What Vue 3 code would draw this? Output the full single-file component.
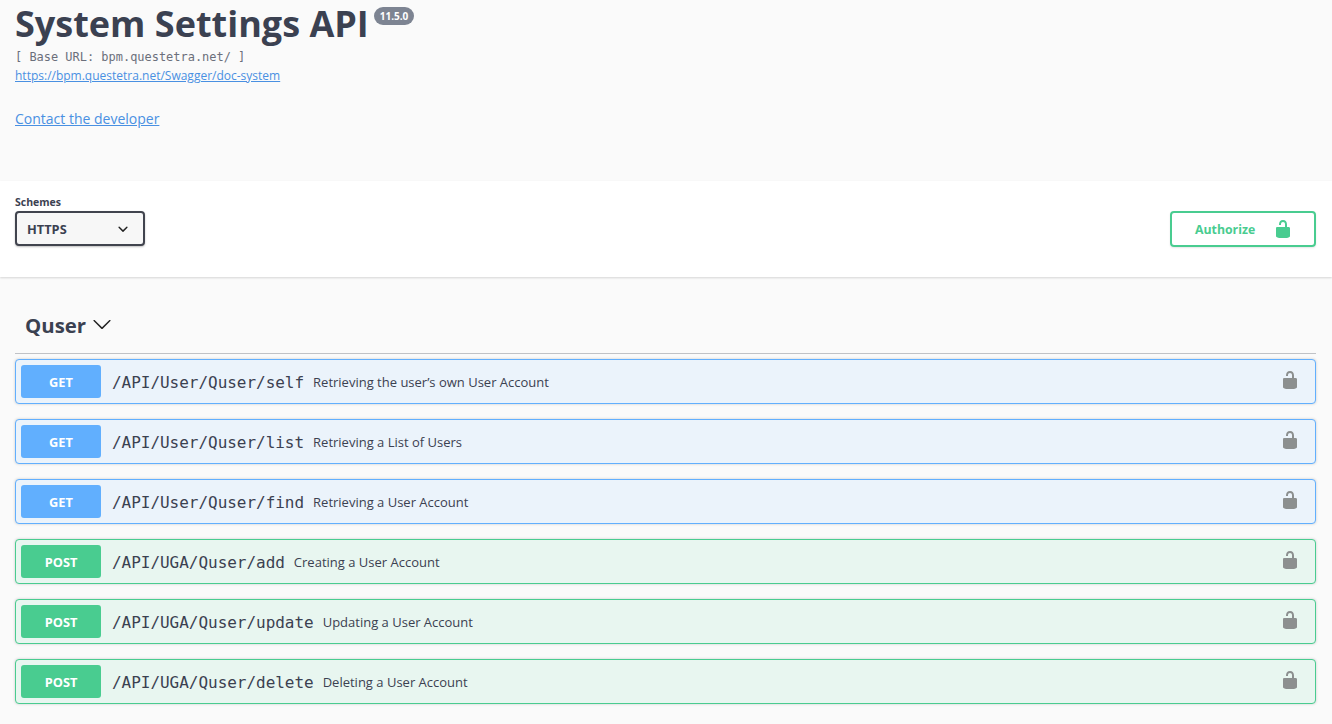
<script setup>
const rows = [
  { m: 'GET', p: '/API/User/Quser/self', d: 'Retrieving the user’s own User Account' },
  { m: 'GET', p: '/API/User/Quser/list', d: 'Retrieving a List of Users' },
  { m: 'GET', p: '/API/User/Quser/find', d: 'Retrieving a User Account' },
  { m: 'POST', p: '/API/UGA/Quser/add', d: 'Creating a User Account' },
  { m: 'POST', p: '/API/UGA/Quser/update', d: 'Updating a User Account' },
  { m: 'POST', p: '/API/UGA/Quser/delete', d: 'Deleting a User Account' },
]
const lock = 'M15.8 8H14V5.6C14 2.703 12.665 1 10 1 7.334 1 6 2.703 6 5.6V6h2v-.801C8 3.754 8.797 3 10 3c1.203 0 2 .754 2 2.199V8H4c-.553 0-1 .646-1 1.199V17c0 .549.428 1.139.951 1.307l1.197.387C5.672 18.861 6.55 19 7.1 19h5.8c.549 0 1.428-.139 1.951-.307l1.196-.387c.524-.167.953-.757.953-1.306V9.199C17 8.646 16.352 8 15.8 8z'
const arrow = 'M17.418 6.109c.272-.268.709-.268.979 0s.271.701 0 .969l-7.908 7.83c-.27.268-.707.268-.979 0l-7.908-7.83c-.27-.268-.27-.701 0-.969.271-.268.709-.268.979 0L10 13.25l7.418-7.141z'
const selArrow = 'M13.418 7.859a.695.695 0 0 1 .978 0 .68.68 0 0 1 0 .969l-3.908 3.83a.697.697 0 0 1-.979 0l-3.908-3.83a.68.68 0 0 1 0-.969.695.695 0 0 1 .978 0L10 11l3.418-3.141z'
</script>

<template>
  <div class="page">
    <section class="info">
      <div class="title-line">
        <h2 class="title">System Settings API</h2>
        <span class="version">11.5.0</span>
      </div>
      <div class="base">[ Base URL: bpm.questetra.net/ ]</div>
      <a class="spec" href="#">https://bpm.questetra.net/Swagger/doc-system</a>
      <a class="contact" href="#">Contact the developer</a>
    </section>

    <section class="schemes">
      <div class="scheme-col">
        <div class="scheme-label">Schemes</div>
        <div class="select">
          <span>HTTPS</span>
          <svg class="sel-arrow" viewBox="0 0 20 20"><path :d="selArrow" /></svg>
        </div>
      </div>
      <button class="authorize">
        <span>Authorize</span>
        <svg class="auth-lock" viewBox="0 0 20 20"><path :d="lock" /></svg>
      </button>
    </section>

    <section class="ops">
      <h3 class="tag">
        <span>Quser</span>
        <svg class="tag-arrow" viewBox="0 0 20 20"><path :d="arrow" /></svg>
      </h3>
      <div v-for="r in rows" :key="r.p" class="op" :class="r.m.toLowerCase()">
        <span class="method">{{ r.m }}</span>
        <span class="path">{{ r.p }}</span>
        <span class="desc">{{ r.d }}</span>
        <svg class="op-lock" viewBox="0 0 20 20"><path :d="lock" /></svg>
      </div>
    </section>
  </div>
</template>

<style>
html, body { margin: 0; background: #fafafa; }
</style>

<style scoped>
.page {
  height: 724px;
  overflow: hidden;
  background: #fafafa;
  color: #3b4151;
  font-family: "Open Sans", sans-serif;
}
.info {
  height: 181px;
  box-sizing: border-box;
  padding: 0 15px;
  display: flex;
  flex-direction: column;
  align-items: flex-start;
}
.title-line { display: flex; align-items: flex-start; height: 47px; }
.title { margin: 0; font-size: 36px; line-height: 47px; font-weight: 700; color: #3b4151; }
.version {
  margin: 7px 0 0 5px;
  padding: 2px 6px;
  height: 14px;
  line-height: 14px;
  border-radius: 57px;
  background: #7d8492;
  color: #fff;
  font-size: 10px;
  font-weight: 700;
}
.base {
  margin-top: 3px;
  font-family: "DejaVu Sans Mono", monospace;
  font-size: 11.96px;
  line-height: 14px;
  color: #6b6f7b;
}
.spec {
  margin-top: 3px;
  font-size: 12px;
  line-height: 17px;
  color: #4990e2;
}
.contact {
  margin-top: 25px;
  font-size: 14px;
  line-height: 19px;
  color: #4990e2;
}
.schemes {
  height: 96px;
  box-sizing: border-box;
  padding: 14px 16px 0 15px;
  background: #fff;
  box-shadow: 0 1px 2px 0 rgba(0, 0, 0, .15);
  display: flex;
  justify-content: space-between;
  align-items: flex-start;
  position: relative;
}
.scheme-label { font-size: 10.5px; line-height: 15px; font-weight: 700; color: #3b4151; }
.select {
  margin-top: 1px;
  width: 130px;
  height: 35px;
  box-sizing: border-box;
  padding: 0 10px 0 10px;
  border: 2px solid #41444e;
  border-radius: 4px;
  background: #f7f7f7;
  box-shadow: 0 1px 2px 0 rgba(0, 0, 0, .25);
  display: flex;
  align-items: center;
  justify-content: space-between;
  font-size: 12.8px;
  line-height: 33px;
  font-weight: 700;
}
.select span { padding-top: 1px; }
.sel-arrow { width: 20px; height: 20px; margin-top: 1px; fill: #222; }
.authorize {
  margin-top: 16px;
  width: 146px;
  height: 36px;
  box-sizing: border-box;
  padding: 0 21px 0 23px;
  border: 2px solid #49cc90;
  border-radius: 4px;
  background: transparent;
  color: #49cc90;
  display: flex;
  align-items: center;
  justify-content: space-between;
  font-family: "Open Sans", sans-serif;
  font-size: 12.3px;
  font-weight: 700;
  box-shadow: 0 1px 2px rgba(0, 0, 0, .1);
}
.auth-lock { width: 20px; height: 20px; fill: #49cc90; }
.ops { padding: 0 16px 0 15px; }
.tag {
  margin: 0 0 5px;
  height: 77px;
  box-sizing: border-box;
  padding: 32px 0 0 10px;
  border-bottom: 1px solid rgba(59, 65, 81, .3);
  display: flex;
  align-items: flex-start;
  font-size: 20.4px;
  line-height: 32px;
  font-weight: 700;
  color: #3b4151;
}
.tag-arrow { width: 20px; height: 20px; margin: 5px 0 0 6px; fill: #222; }
.op {
  height: 45px;
  box-sizing: border-box;
  margin-bottom: 15px;
  padding: 0 15px 0 5px;
  border: 1px solid;
  border-radius: 4px;
  box-shadow: 0 0 3px rgba(0, 0, 0, .19);
  display: flex;
  align-items: center;
}
.op.get { background: #ebf3fb; border-color: #61affe; }
.op.post { background: #e8f6f0; border-color: #49cc90; }
.method {
  width: 80px;
  height: 33px;
  line-height: 35px;
  border-radius: 3px;
  color: #fff;
  text-align: center;
  font-size: 12.8px;
  font-weight: 700;
}
.get .method { background: #61affe; }
.post .method { background: #49cc90; }
.path {
  margin: 2px 0 0 11px;
  font-family: "DejaVu Sans Mono", monospace;
  font-size: 16px;
  letter-spacing: -.03px;
  color: #3b4151;
}
.desc {
  margin-left: 9px;
  font-size: 13px;
  color: #3b4151;
}
.op-lock { margin: 0 0 3px auto; width: 20px; height: 20px; fill: #8c8f8f; }
</style>
